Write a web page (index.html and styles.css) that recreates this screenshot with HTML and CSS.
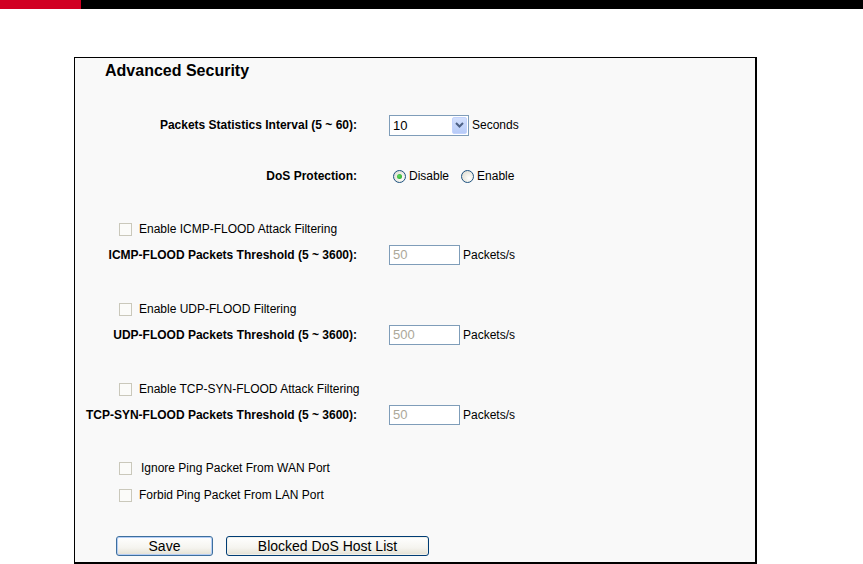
FILE: index.html
```html
<!DOCTYPE html>
<html>
<head>
<meta charset="utf-8">
<link rel="stylesheet" href="styles.css">
</head>
<body>
<div class="topbar"><div class="red"></div><div class="black"></div></div>
<div class="box">
  <div class="title">Advanced Security</div>

  <div class="row r-interval">
    <div class="label">Packets Statistics Interval (5 ~ 60):</div>
    <div class="ctrl">
      <div class="select"><span class="sel-text">10</span><span class="sel-btn"><svg width="9" height="6" viewBox="0 0 9 6"><path d="M1 1 L4.5 4.5 L8 1" fill="none" stroke="#4d6185" stroke-width="2"/></svg></span></div>
      <span class="unit">Seconds</span>
    </div>
  </div>

  <div class="row r-dos">
    <div class="label">DoS Protection:</div>
    <div class="ctrl">
      <span class="radio checked"></span><span class="rlabel">Disable</span>
      <span class="radio"></span><span class="rlabel">Enable</span>
    </div>
  </div>

  <div class="row cbrow r-gap27"><span class="cb"></span><span class="cblabel">Enable ICMP-FLOOD Attack Filtering</span></div>
  <div class="row">
    <div class="label">ICMP-FLOOD Packets Threshold (5 ~ 3600):</div>
    <div class="ctrl"><div class="input">50</div><span class="unit">Packets/s</span></div>
  </div>

  <div class="row cbrow r-gap28"><span class="cb"></span><span class="cblabel">Enable UDP-FLOOD Filtering</span></div>
  <div class="row">
    <div class="label">UDP-FLOOD Packets Threshold (5 ~ 3600):</div>
    <div class="ctrl"><div class="input">500</div><span class="unit">Packets/s</span></div>
  </div>

  <div class="row cbrow r-gap28"><span class="cb"></span><span class="cblabel">Enable TCP-SYN-FLOOD Attack Filtering</span></div>
  <div class="row">
    <div class="label">TCP-SYN-FLOOD Packets Threshold (5 ~ 3600):</div>
    <div class="ctrl"><div class="input">50</div><span class="unit">Packets/s</span></div>
  </div>

  <div class="row cbrow r-gap27"><span class="cb"></span><span class="cblabel extra">Ignore Ping Packet From WAN Port</span></div>
  <div class="row cbrow r-gap1"><span class="cb"></span><span class="cblabel">Forbid Ping Packet From LAN Port</span></div>

  <div class="row btnrow">
    <button class="btn save">Save</button>
    <button class="btn blocked">Blocked DoS Host List</button>
  </div>
</div>
</body>
</html>
```

FILE: styles.css
```css
html, body {
  margin: 0;
  padding: 0;
  background: #ffffff;
  font-family: "Liberation Sans", Arial, sans-serif;
  color: #000;
}
.topbar {
  display: flex;
  height: 9px;
}
.topbar .red {
  width: 81px;
  background: #d10022;
}
.topbar .black {
  flex: 1;
  background: #000;
}
.box {
  margin-top: 48px;
  margin-left: 74px;
  width: 680px;
  height: 503px;
  padding-top: 1px;
  border-left: 1px solid #000;
  border-top: 1px solid #000;
  border-right: 2px solid #000;
  border-bottom: 2px solid #000;
  background: #f9f9f9;
  display: flex;
  flex-direction: column;
}
.title {
  height: 24px;
  line-height: 24px;
  padding-left: 30px;
  font-size: 16px;
  font-weight: bold;
}
.row {
  height: 26px;
  display: flex;
  align-items: center;
  font-size: 12px;
}
.r-interval { margin-top: 29px; }
.r-dos { margin-top: 25px; }
.r-gap27 { margin-top: 27px; }
.r-gap28 { margin-top: 28px; }
.r-gap1 { margin-top: 1px; }
.label {
  width: 282px;
  text-align: right;
  font-weight: bold;
  white-space: nowrap;
}
.ctrl {
  margin-left: 32px;
  display: flex;
  align-items: center;
}
.select {
  width: 78px;
  height: 19px;
  border: 1px solid #7f9db9;
  background: #fff;
  display: flex;
  align-items: center;
  justify-content: space-between;
  box-sizing: content-box;
}
.sel-text {
  font-size: 13px;
  padding-left: 3px;
}
.sel-btn {
  width: 15px;
  height: 17px;
  margin-right: 1px;
  background: linear-gradient(#d3e0fd, #b7cbf8);
  border: 1px solid #c3d3fd;
  box-sizing: border-box;
  border-radius: 2px;
  display: flex;
  align-items: center;
  justify-content: center;
}
.unit {
  margin-left: 3px;
}
.radio {
  width: 11px;
  height: 11px;
  border: 1px solid #1c5180;
  border-radius: 50%;
  background: radial-gradient(circle at 65% 65%, #ffffff 0%, #f0efe8 40%, #d8d6cc 100%);
  margin-left: 4px;
  margin-right: 3px;
  display: inline-flex;
  align-items: center;
  justify-content: center;
}
.radio.checked::after {
  content: "";
  width: 5px;
  height: 5px;
  border-radius: 50%;
  background: radial-gradient(circle at 40% 40%, #5ed85e, #21a121);
}
.rlabel + .radio {
  margin-left: 12px;
}
.cbrow {
  padding-left: 44px;
}
.cb {
  width: 11px;
  height: 11px;
  border: 1px solid #cac8bb;
  background: #fbfbf9;
  margin-right: 7px;
}
.cblabel.extra {
  padding-left: 2px;
}
.input {
  width: 66px;
  height: 18px;
  line-height: 18px;
  border: 1px solid #7f9db9;
  background: #fff;
  color: #aca899;
  font-size: 13px;
  padding-left: 3px;
}
.btnrow {
  margin-top: 25px;
  padding-left: 41px;
}
.btn {
  height: 20px;
  padding: 0;
  font-family: "Liberation Sans", Arial, sans-serif;
  font-size: 14px;
  color: #000;
  border-radius: 3px;
  background: linear-gradient(#ffffff 0%, #f5f4ef 60%, #e3e0d3 100%);
  line-height: 17px;
}
.save {
  width: 97px;
  border: 1px solid #3d6f9e;
  box-shadow: inset 0 0 0 1px #b6cef5;
}
.blocked {
  width: 203px;
  margin-left: 13px;
  border: 1px solid #003c74;
  box-shadow: inset 0 0 0 1px #f0f0ea;
}
```
